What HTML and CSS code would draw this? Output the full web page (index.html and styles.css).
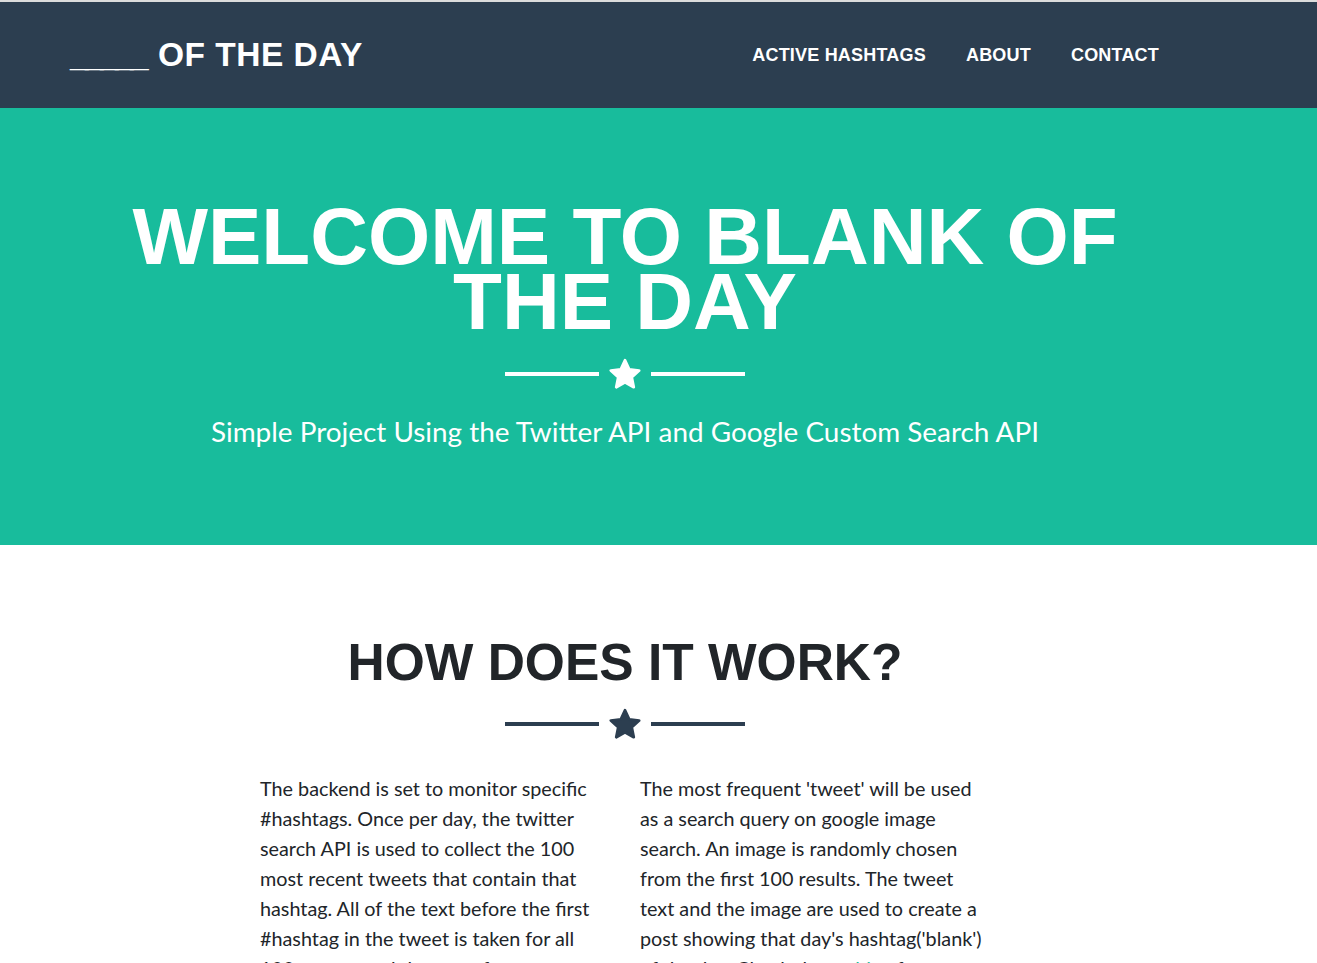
FILE: index.html
```html
<!DOCTYPE html>
<html lang="en">
<head>
<meta charset="utf-8">
<title>Blank of the Day</title>
<link rel="stylesheet" href="styles.css">
</head>
<body>
<nav class="navbar">
  <div class="container nav-inner">
    <a class="brand" href="#"><span class="brand-blank">_____</span> OF THE DAY</a>
    <ul class="nav-links">
      <li><a href="#">Active Hashtags</a></li>
      <li><a href="#">About</a></li>
      <li><a href="#">Contact</a></li>
    </ul>
  </div>
</nav>

<header class="hero">
  <div class="container hero-inner">
    <h1 class="hero-title">Welcome to Blank of<br>the Day</h1>
    <div class="divider divider-light">
      <span class="divider-line"></span>
      <svg class="divider-star" viewBox="0 0 24 24" aria-hidden="true"><polygon points="12,2.3 14.94,8.76 21.99,9.56 16.76,14.35 18.17,21.29 12,17.8 5.83,21.29 7.24,14.35 2.01,9.56 9.06,8.76"/></svg>
      <span class="divider-line"></span>
    </div>
    <p class="hero-sub">Simple Project Using the Twitter API and Google Custom Search API</p>
  </div>
</header>

<section class="about">
  <div class="container">
    <h2 class="section-title">How does it work?</h2>
    <div class="divider divider-dark">
      <span class="divider-line"></span>
      <svg class="divider-star" viewBox="0 0 24 24" aria-hidden="true"><polygon points="12,2.3 14.94,8.76 21.99,9.56 16.76,14.35 18.17,21.29 12,17.8 5.83,21.29 7.24,14.35 2.01,9.56 9.06,8.76"/></svg>
      <span class="divider-line"></span>
    </div>
    <div class="cols">
      <p class="col-text">The backend is set to monitor specific #hashtags. Once per day, the twitter search API is used to collect the 100 most recent tweets that contain that hashtag. All of the text before the first #hashtag in the tweet is taken for all 100 tweets and the most frequent one is kept.</p>
      <p class="col-text">The most frequent 'tweet' will be used as a search query on google image search. An image is randomly chosen from the first 100 results. The tweet text and the image are used to create a post showing that day's hashtag('blank') of the day. Check the <a href="#">archive</a> for more.</p>
    </div>
  </div>
</section>
</body>
</html>
```

FILE: styles.css
```css
* { box-sizing: border-box; }

html, body {
  margin: 0;
  padding: 0;
}

body {
  font-family: "Lato", "Liberation Sans", sans-serif;
  color: #212529;
  background: #fff;
  border-top: 2px solid #dcdcdc;
}

.container {
  width: 1170px;
  margin: 0 auto;
}

/* offsets the centre line of the page the way the reference does */
.navbar, .hero, .about {
  padding-right: 67px;
}

/* NAVBAR */
.navbar {
  background: #2c3e50;
  height: 106px;
}

.nav-inner {
  height: 100%;
  display: flex;
  align-items: center;
  justify-content: space-between;
  padding: 0 31px 0 30px;
}

.brand {
  font-family: "Liberation Sans", Arial, sans-serif;
  font-weight: 700;
  font-size: 33.5px;
  color: #fff;
  text-decoration: none;
  letter-spacing: 0.5px;
  white-space: nowrap;
}

.brand-blank {
  letter-spacing: -3.6px;
  margin-right: 3px;
}

.nav-links {
  list-style: none;
  margin: 0;
  padding: 0;
  display: flex;
}

.nav-links a {
  display: block;
  padding: 8px 20px;
  font-family: "Liberation Sans", Arial, sans-serif;
  font-weight: 700;
  font-size: 18px;
  letter-spacing: 0.2px;
  text-transform: uppercase;
  color: #fff;
  text-decoration: none;
}

/* HERO */
.hero {
  background: #18bc9c;
  color: #fff;
  padding-top: 96px;
  padding-bottom: 97px;
}

.hero-inner {
  text-align: center;
}

.hero-title {
  margin: 0;
  font-family: "Liberation Sans", Arial, sans-serif;
  font-weight: 700;
  font-size: 80px;
  line-height: 65px;
  text-transform: uppercase;
}

.hero-sub {
  margin: 24px 0 0;
  font-family: "Lato", sans-serif;
  font-weight: 400;
  font-size: 27.9px;
  line-height: 34px;
}

/* DIVIDER */
.divider {
  display: flex;
  justify-content: center;
  align-items: center;
  height: 33px;
}

.divider-light { margin-top: 23px; }
.divider-dark { margin-top: 16px; }

.divider-line {
  width: 94px;
  height: 4px;
}

.divider-star {
  width: 34px;
  height: 34px;
  margin: 0 9px;
}

.divider-star polygon {
  stroke-width: 2;
  stroke-linejoin: round;
}

.divider-light .divider-line { background: #fff; }
.divider-light .divider-star polygon { fill: #fff; stroke: #fff; }

.divider-dark .divider-line { background: #2c3e50; }
.divider-dark .divider-star polygon { fill: #2c3e50; stroke: #2c3e50; }

/* ABOUT */
.about {
  padding-top: 89px;
  padding-bottom: 80px;
}

.section-title {
  margin: 0;
  text-align: center;
  font-family: "Liberation Sans", Arial, sans-serif;
  font-weight: 700;
  font-size: 51.5px;
  line-height: 57px;
  text-transform: uppercase;
  color: #212529;
}

.cols {
  display: grid;
  grid-template-columns: 350px 350px;
  column-gap: 30px;
  justify-content: center;
  margin-top: 33px;
}

.col-text {
  margin: 0;
  font-size: 19.8px;
  line-height: 30px;
  color: #212529;
}

.col-text a {
  color: #18bc9c;
  text-decoration: none;
}
```
